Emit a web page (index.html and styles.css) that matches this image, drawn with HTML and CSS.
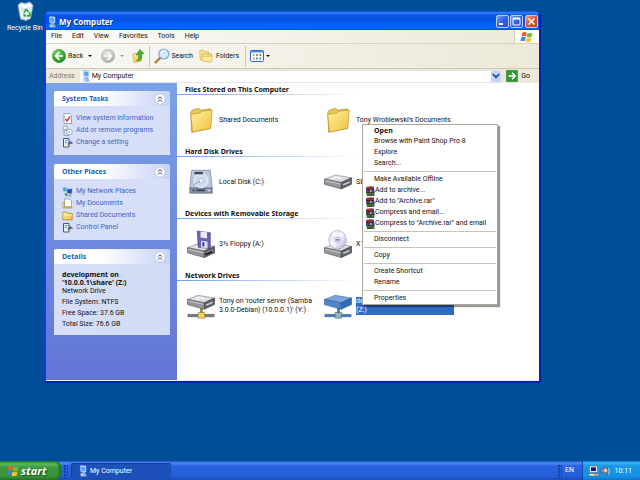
FILE: index.html
```html
<!DOCTYPE html>
<html lang="en">
<head>
    <meta charset="UTF-8">
    <meta name="viewport" content="width=device-width, initial-scale=1.0">
    <title>My Computer</title>
    <link rel="stylesheet" href="styles.css">
</head>
<body>

<!-- Icons -->
<svg class="sprite" aria-hidden="true">
  <defs>
    <linearGradient id="gFolder" x1="0" y1="0" x2="1" y2="1">
      <stop offset="0" stop-color="#fff3a0"/><stop offset="1" stop-color="#f0bf3c"/>
    </linearGradient>
    <radialGradient id="gGreen" cx="0.4" cy="0.3" r="0.8">
      <stop offset="0" stop-color="#7fdc6c"/><stop offset="0.6" stop-color="#35a52c"/><stop offset="1" stop-color="#1c7a1a"/>
    </radialGradient>
    <radialGradient id="gGrey" cx="0.4" cy="0.3" r="0.8">
      <stop offset="0" stop-color="#e6e6e2"/><stop offset="1" stop-color="#a9a9a4"/>
    </radialGradient>
    <linearGradient id="gDisc" x1="0" y1="0" x2="1" y2="1">
      <stop offset="0" stop-color="#d9d4f4"/><stop offset="0.5" stop-color="#f6f6ff"/><stop offset="1" stop-color="#a9a6dc"/>
    </linearGradient>
  </defs>
  <symbol id="computer" viewBox="0 0 12 12">
    <path d="M3.500 .5l5.500 .5v6l-5.500-.5z" fill="#dfe9f6" stroke="#8fb0d8" stroke-width="0.500"/>
    <path d="M4.200 1.500l4 .4v4.200l-4-.4z" fill="#4fa4f6"/>
    <path d="M5 7h2.800l.5 1.500H4.500z" fill="#8fb4dc"/>
    <path d="M3.500 8.500h5l.8 2.800H4z" fill="#cfe2f5" stroke="#6f93c0" stroke-width="0.500"/>
    <path d="M6 9.500h2.500v1H6z" fill="#3c8ee0"/>
  </symbol>
  <symbol id="winflag" viewBox="0 0 14 12">
    <path d="M2.500 1.500Q4.500.3 6.800 1.500L5.900 5.500Q3.600 4.400 1.500 5.500z" fill="#e8602c"/>
    <path d="M7.600 1.800Q10 2.900 12.500 1.700L11.600 5.700Q9 7 6.700 5.800z" fill="#7ab93b"/>
    <path d="M1.300 6.300Q3.500 5.200 5.700 6.300L4.800 10.300Q2.500 9.300.4 10.300z" fill="#3e83dd"/>
    <path d="M6.500 6.700Q8.900 7.800 11.400 6.500L10.500 10.500Q8 11.700 5.600 10.600z" fill="#f7c42c"/>
  </symbol>
  <symbol id="back" viewBox="0 0 14 14">
    <circle cx="7" cy="7" r="6.700" fill="url(#gGreen)" stroke="#3d9a38" stroke-width="0.500"/>
    <path d="M7.400 3.200L3.600 7l3.800 3.800M4 7h7" fill="none" stroke="#fff" stroke-width="1.700"/>
  </symbol>
  <symbol id="forward" viewBox="0 0 14 14">
    <circle cx="7" cy="7" r="6.700" fill="url(#gGrey)" stroke="#a8a8a2" stroke-width="0.500"/>
    <path d="M6.600 3.200L10.400 7l-3.800 3.800M10 7H3" fill="none" stroke="#fff" stroke-width="1.700"/>
  </symbol>
  <symbol id="up" viewBox="0 0 14 14">
    <path d="M2 5l3.500-1 1 1 4-.5v7.500L3 13.500z" fill="url(#gFolder)" stroke="#b58b1e" stroke-width="0.500"/>
    <path d="M5.500 12Q8.500 10 7.500 5.500L5 6l4-5.500L13 4.500l-2.500.5Q12 11 5.500 12z" fill="#44b32f" stroke="#247c18" stroke-width="0.500"/>
  </symbol>
  <symbol id="search" viewBox="0 0 16 16">
    <path d="M6.500 9.500L1.500 14.500" stroke="#b8793e" stroke-width="2.400" stroke-linecap="round"/>
    <circle cx="9.800" cy="6" r="5" fill="#cfeafc" stroke="#86a9cf" stroke-width="1.200"/>
    <path d="M7 5.500Q8 3 10.500 3" fill="none" stroke="#fff" stroke-width="1.200"/>
  </symbol>
  <symbol id="folders" viewBox="0 0 14 14">
    <path d="M.5 2l4-1 1 1.500h4v7L1.500 11z" fill="#f8e38a" stroke="#c6a13a" stroke-width="0.500"/>
    <path d="M3.500 5l3-1 1 1.200 5-.4L12 13 4 12z" fill="url(#gFolder)" stroke="#b58b1e" stroke-width="0.500"/>
    <path d="M3 7.500h8l2.500-.5-1.500 6-8-1z" fill="#ffef9e" stroke="#c9a23c" stroke-width="0.400"/>
  </symbol>
  <symbol id="views" viewBox="0 0 14 12">
    <rect x="0.500" y="0.500" width="13" height="11" rx="1" fill="#fff" stroke="#2a66c8"/>
    <path d="M1 1h12v1.500H1z" fill="#4b8df0"/>
    <path d="M3 4h1.500v2H3z" fill="#7a9fd8"/><path d="M6.200 4h1.500v2H6.200z" fill="#d2453a"/><path d="M9.500 4H11v2H9.500z" fill="#35964a"/>
    <path d="M3 7.500h1.500v2H3z" fill="#c88b3c"/><path d="M6.200 7.500h1.500v2H6.200z" fill="#3569c4"/><path d="M9.500 7.500H11v2H9.500z" fill="#4a6a9c"/>
  </symbol>
  <symbol id="go" viewBox="0 0 12 12">
    <rect x="0.300" y="0.300" width="11.400" height="11.400" rx="1" fill="#35953a" stroke="#2f7d30" stroke-width="0.500"/>
    <path d="M6 2.800L9.200 6 6 9.200M9 6H2.500" fill="none" stroke="#fff" stroke-width="1.400"/>
  </symbol>
  <symbol id="chevrons" viewBox="0 0 12 12">
    <circle cx="6" cy="6" r="5.200" fill="#fff" stroke="#b3bfe0" stroke-width="0.700"/>
    <path d="M4 5.700l2-2 2 2M4 8.600l2-2 2 2" fill="none" stroke="#223a86" stroke-width="1"/>
  </symbol>
  <symbol id="sysinfo" viewBox="0 0 11 11">
    <path d="M2 .5h5.500L9.500 2.500v8H2z" fill="#fff" stroke="#76829e" stroke-width="0.700"/>
    <path d="M3.500 6l1.500 2L8 3.500" fill="none" stroke="#d43424" stroke-width="1.400"/>
  </symbol>
  <symbol id="programs" viewBox="0 0 11 11">
    <path d="M1 1h4v4H1z" fill="#e8f1e4" stroke="#6c9a76" stroke-width="0.600"/>
    <path d="M2 5h5v5.500H2z" fill="#cfdcf5" stroke="#6b7fae" stroke-width="0.600"/>
    <circle cx="7.500" cy="7" r="2.800" fill="#f4f6fd" stroke="#8190b4" stroke-width="0.600"/>
    <circle cx="7.500" cy="7" r="0.700" fill="#6a7aa8"/>
  </symbol>
  <symbol id="panel" viewBox="0 0 11 11">
    <path d="M1.500 1.500h5.500v8.500H1.500z" fill="#e6f0fb" stroke="#3f5a80" stroke-width="1"/>
    <path d="M3 3.500h2.500M3 5.500h2" stroke="#3a88d8" stroke-width="0.800"/>
    <path d="M6 7.500l3-3M7.500 6h3" stroke="#4d5c70" stroke-width="1.500"/>
    <path d="M6 8.500h2.500" stroke="#d8962e" stroke-width="1"/>
  </symbol>
  <symbol id="network" viewBox="0 0 11 11">
    <path d="M.5 1l5 .5v4.500L1 5.500z" fill="#36a8d8" stroke="#d5e4f4" stroke-width="0.600"/>
    <path d="M4.500 3l6-.5-.5 5.500-5-.5z" fill="#2350b8" stroke="#dbe6f8" stroke-width="0.600"/>
    <path d="M2.500 6.500l3 1.500 .5 2.500-3-1z" fill="#47a65a"/><path d="M6.500 8.500h3.500L9 10.500H7z" fill="#8ba0c4"/>
  </symbol>
  <symbol id="mydocs" viewBox="0 0 11 11">
    <path d="M2.500 1h5l2 2v6h-7z" fill="#fff" stroke="#6782a8" stroke-width="0.600"/>
    <path d="M.8 4.500L2.500 4v5l7-.2.700 1.200H1z" fill="url(#gFolder)" stroke="#a8811c" stroke-width="0.600"/>
  </symbol>
  <symbol id="smallfolder" viewBox="0 0 11 11">
    <path d="M.8 2h3.400l1 1.300h5v6.500H.8z" fill="url(#gFolder)" stroke="#a8811c" stroke-width="0.700"/>
    <path d="M1.500 5h8.300" stroke="#fff5bd" stroke-width="0.900"/>
  </symbol>
  <symbol id="folder" viewBox="0 0 30 30">
    <path d="M4 7l1.500-2.500 7-2L15 4.500 25 3l1 1.500-1 19.500L5 28z" fill="#edc750" stroke="#ab842a" stroke-width="0.700"/>
    <path d="M4 9l10-1.500 2-2L27 4.500 25.500 24 6 28z" fill="url(#gFolder)" stroke="#b8912f" stroke-width="0.700"/>
  </symbol>
  <symbol id="hdd" viewBox="0 0 30 30">
    <path d="M5 2.500h20l2 19H3z" fill="#bcc9dc" stroke="#6d7b92" stroke-width="0.700"/>
    <path d="M3 21.500h24v5.500H3z" fill="#8994a8" stroke="#4e5a70" stroke-width="0.700"/>
    <circle cx="15" cy="13.500" r="7.500" fill="#d3dcea" stroke="#eef3fa"/>
    <circle cx="15" cy="13.500" r="2.500" fill="#f0f4fa" stroke="#93a1b8" stroke-width="0.600"/>
    <path d="M8 4.200h9v2.500H8z" fill="#3d4658"/><path d="M7 18l7-4" stroke="#8997ae"/>
    <path d="M6 24h2M10 24h9" stroke="#333d4f" stroke-width="1.800"/><path d="M22 24h3" stroke="#d8e2ee" stroke-width="1.500"/>
  </symbol>
  <symbol id="box" viewBox="0 0 30 16">
    <path d="M.5 5L12 .5l17.500 3L18.500 8.500z" fill="#dedfe1" stroke="#77797d" stroke-width="0.600"/>
    <path d="M.5 5l18 3.500v7L.5 10.500z" fill="#94969b" stroke="#4a4c51" stroke-width="0.600"/>
    <path d="M29.500 3.500v7l-11 5v-7z" fill="#5f6167" stroke="#333539" stroke-width="0.600"/>
    <path d="M1.500 6.700l16.500 3.600" stroke="#c9cbce" stroke-width="1"/>
    <path d="M9 4.500l4-1.500 6 1" fill="none" stroke="#fff"/>
    <path d="M20.500 11l7-3" stroke="#d0d2d5" stroke-width="1.500"/>
  </symbol>
  <symbol id="drive" viewBox="0 0 30 30">
    <use href="#box" x="0" y="7" width="30" height="16"/>
  </symbol>
  <symbol id="floppy" viewBox="0 0 30 30">
    <use href="#box" x="0" y="14" width="30" height="16"/>
    <path d="M11 1l14 2v17l-13-1.500z" fill="#6462b4" stroke="#3c3a86" stroke-width="0.600"/>
    <path d="M14.500 1.500l7 1v6.500l-7-1z" fill="#eceaf8"/><path d="M15 11.500l7 .8V19.600l-7-.8z" fill="#d9dcf0"/>
    <path d="M16.500 13l2 .2v4.500l-2-.2z" fill="#3c3a86"/>
    <path d="M20 26l7-3" stroke="#111" stroke-width="1.800"/>
  </symbol>
  <symbol id="cdrom" viewBox="0 0 30 30">
    <use href="#box" x="0" y="14" width="30" height="16"/>
    <ellipse cx="14.500" cy="10.500" rx="9.300" ry="10" fill="url(#gDisc)" stroke="#8c8ab4" stroke-width="0.600"/>
    <path d="M14.500 10.500L8 4q3-3.500 7-3z" fill="#fff" opacity="0.700"/>
    <circle cx="14.500" cy="10.500" r="3" fill="#e4e4ee" stroke="#8a8aa6" stroke-width="0.600"/>
    <circle cx="14.500" cy="10.500" r="1.200" fill="#55577a"/>
  </symbol>
  <symbol id="netdrive" viewBox="0 0 30 30">
    <path d="M14 17h3v7h-3z" fill="#8f9136"/>
    <use href="#box" x="0" y="3" width="30" height="16"/>
    <path d="M1 24h28v2.500H1z" fill="#7c7f84" stroke="#3f4246" stroke-width="0.600"/>
    <path d="M12 22h7v6h-7z" fill="#f5d66a" stroke="#94792a" stroke-width="0.700"/>
  </symbol>
  <symbol id="netselected" viewBox="0 0 30 30">
    <path d="M14 17h3v7h-3z" fill="#4c7a8e"/>
    <path d="M.5 8L12 3.500l17.500 3L18.500 11.500z" fill="#7aa6dc" stroke="#39659f" stroke-width="0.600"/>
    <path d="M.5 8l18 3.500v7L.5 13.500z" fill="#5286c6" stroke="#2b5796" stroke-width="0.600"/>
    <path d="M29.500 6.500v7l-11 5v-7z" fill="#346bb0" stroke="#23508c" stroke-width="0.600"/>
    <path d="M1 24h28v2.500H1z" fill="#4379b8" stroke="#24538f" stroke-width="0.600"/>
    <path d="M12 22h7v6h-7z" fill="#93b5bf" stroke="#426d8c" stroke-width="0.700"/>
  </symbol>
  <symbol id="rar" viewBox="0 0 10 10">
    <path d="M1 1.500L2.500.5H9V3L9.500 4H1z" fill="#9c2b4c"/>
    <path d="M1 4h8.500v2.500H1z" fill="#2f4fb0"/><path d="M1 6.800h8.500V9.500H2z" fill="#2d8a3e"/>
    <path d="M1.500 3.600h7M1.500 6.500h8M2 9.300h7" stroke="#151515" stroke-width="0.800"/>
    <path d="M5 .5h1.700v9H5z" fill="#7a3a24"/><path d="M5.200 4h1.300v2H5.200z" fill="#e2c04a"/>
  </symbol>
  <symbol id="bin" viewBox="0 0 20 20">
    <path d="M3 4l3-2.500 4 1 5-1.500 3 3.500-2.500 13L11 19.500 5.500 18z" fill="#dcebf2" stroke="#94b8cc" stroke-width="0.700"/>
    <path d="M4 4.500L7 3l3 1.500L14.500 3 17 5l-6 2z" fill="#fff"/>
    <path d="M5 6l2 11M11 7.500v11" stroke="#fff" stroke-width="1"/>
    <path d="M9 11.500l2-3 2.500 2M14.500 11l.5 3.500-3 .7M11 15.500l-2.500-2.200" fill="none" stroke="#37ad3b" stroke-width="1.800"/>
  </symbol>
  <symbol id="traynet" viewBox="0 0 12 12">
    <path d="M1.500 1h8v6.500h-8z" fill="#f4f1e4" stroke="#555" stroke-width="0.500"/>
    <path d="M3 2.300h5v3.800H3z" fill="#14148e"/>
    <path d="M1 8.500h9.500V11H1z" fill="#ece8d8" stroke="#555" stroke-width="0.500"/>
    <path d="M6.500 9.800h3" stroke="#333" stroke-width="0.700"/>
  </symbol>
  <symbol id="speaker" viewBox="0 0 10 10">
    <path d="M.5 3.500l2-.5 3.500-2.500L8 4 7 8.500 3.500 7 1 6.500z" fill="#8e9296" stroke="#4c5054" stroke-width="0.600"/>
    <circle cx="5.500" cy="4.500" r="2" fill="#dadcde" stroke="#55585c" stroke-width="0.500"/>
    <path d="M8.500 2q1.500 3 0 6.500" fill="none" stroke="#d2dce8" stroke-width="0.900"/>
  </symbol>
</svg>

<main class="desktop">
  <button class="shortcut" type="button">
    <svg class="icon-20"><use href="#bin"/></svg>
    <span>Recycle Bin</span>
  </button>

  <!-- Explorer window -->
  <section class="window">
    <header class="titlebar">
      <svg class="icon-12"><use href="#computer"/></svg>
      <h1>My Computer</h1>
      <div class="window-buttons">
        <button class="win-btn" type="button" aria-label="Minimize"><svg viewBox="0 0 11 11"><path d="M2 8h4" stroke="#fff" stroke-width="2"/></svg></button>
        <button class="win-btn" type="button" aria-label="Maximize"><svg viewBox="0 0 11 11"><path d="M2 2.500h7v6.500H2z" fill="none" stroke="#fff"/><path d="M2 2.500h7" stroke="#fff" stroke-width="2"/></svg></button>
        <button class="win-btn close" type="button" aria-label="Close"><svg viewBox="0 0 11 11"><path d="M2.500 2.500l6 6M8.500 2.500l-6 6" stroke="#fff" stroke-width="1.600"/></svg></button>
      </div>
    </header>

    <nav class="menubar">
      <button type="button">File</button>
      <button type="button">Edit</button>
      <button type="button">View</button>
      <button type="button">Favorites</button>
      <button type="button">Tools</button>
      <button type="button">Help</button>
      <span class="brand"><svg class="icon-14"><use href="#winflag"/></svg></span>
    </nav>

    <div class="toolbar">
      <button class="tool tool-back" type="button"><svg class="icon-14"><use href="#back"/></svg>Back<i class="caret"></i></button>
      <button class="tool tool-forward" type="button" aria-label="Forward" disabled><svg class="icon-14"><use href="#forward"/></svg><i class="caret"></i></button>
      <button class="tool" type="button" aria-label="Up"><svg class="icon-14"><use href="#up"/></svg></button>
      <span class="divider"></span>
      <button class="tool tool-search" type="button"><svg class="icon-16"><use href="#search"/></svg>Search</button>
      <button class="tool tool-folders" type="button"><svg class="icon-14"><use href="#folders"/></svg>Folders</button>
      <span class="divider"></span>
      <button class="tool" type="button" aria-label="Views"><svg class="icon-14"><use href="#views"/></svg><i class="caret"></i></button>
    </div>

    <form class="address">
      <label for="address">Address</label>
      <div class="address-box">
        <svg class="icon-12"><use href="#computer"/></svg>
        <input id="address" type="text" value="My Computer">
        <button class="drop" type="button" aria-label="Show list"><svg viewBox="0 0 8 8"><path d="M1.500 2.500L4 5l2.500-2.500" fill="none" stroke="#3b5795" stroke-width="1.600"/></svg></button>
      </div>
      <button class="go" type="button"><svg class="icon-12"><use href="#go"/></svg>Go</button>
    </form>

    <div class="content">
      <aside class="sidebar">
        <section class="panel">
          <h2>System Tasks <svg class="icon-12"><use href="#chevrons"/></svg></h2>
          <ul class="links">
            <li><a href="#"><svg class="icon-11"><use href="#sysinfo"/></svg>View system information</a></li>
            <li><a href="#"><svg class="icon-11"><use href="#programs"/></svg>Add or remove programs</a></li>
            <li><a href="#"><svg class="icon-11"><use href="#panel"/></svg>Change a setting</a></li>
          </ul>
        </section>
        <section class="panel">
          <h2>Other Places <svg class="icon-12"><use href="#chevrons"/></svg></h2>
          <ul class="links">
            <li><a href="#"><svg class="icon-11"><use href="#network"/></svg>My Network Places</a></li>
            <li><a href="#"><svg class="icon-11"><use href="#mydocs"/></svg>My Documents</a></li>
            <li><a href="#"><svg class="icon-11"><use href="#smallfolder"/></svg>Shared Documents</a></li>
            <li><a href="#"><svg class="icon-11"><use href="#panel"/></svg>Control Panel</a></li>
          </ul>
        </section>
        <section class="panel">
          <h2>Details <svg class="icon-12"><use href="#chevrons"/></svg></h2>
          <div class="details">
            <strong>development on<br>'10.0.0.1\share' (Z:)</strong>
            <span>Network Drive</span>
            <p>File System: NTFS</p>
            <p>Free Space: 37.6 GB</p>
            <p>Total Size: 76.6 GB</p>
          </div>
        </section>
      </aside>

      <div class="files">
        <section class="group">
          <h2>Files Stored on This Computer</h2>
          <div class="items">
            <div class="item"><svg class="icon-28"><use href="#folder"/></svg><span>Shared Documents</span></div>
            <div class="item"><svg class="icon-28"><use href="#folder"/></svg><span>Tony Wroblewski's Documents</span></div>
          </div>
        </section>
        <section class="group">
          <h2>Hard Disk Drives</h2>
          <div class="items">
            <div class="item"><svg class="icon-28"><use href="#hdd"/></svg><span>Local Disk (C:)</span></div>
            <div class="item"><svg class="icon-28"><use href="#drive"/></svg><span>SE</span></div>
          </div>
        </section>
        <section class="group">
          <h2>Devices with Removable Storage</h2>
          <div class="items">
            <div class="item"><svg class="icon-28"><use href="#floppy"/></svg><span>3½ Floppy (A:)</span></div>
            <div class="item"><svg class="icon-28"><use href="#cdrom"/></svg><span>X1</span></div>
          </div>
        </section>
        <section class="group">
          <h2>Network Drives</h2>
          <div class="items">
            <div class="item"><svg class="icon-28"><use href="#netdrive"/></svg><span>Tony on 'router server (Samba<br>3.0.0-Debian) (10.0.0.1)' (Y:)</span></div>
            <div class="item selected"><svg class="icon-28"><use href="#netselected"/></svg><span>de<br>(Z:)</span></div>
          </div>
        </section>
      </div>
    </div>
  </section>

  <!-- Right click menu -->
  <div class="context-menu" role="menu">
    <button type="button" role="menuitem" class="default">Open</button>
    <button type="button" role="menuitem">Browse with Paint Shop Pro 8</button>
    <button type="button" role="menuitem">Explore</button>
    <button type="button" role="menuitem">Search...</button>
    <hr>
    <button type="button" role="menuitem">Make Available Offline</button>
    <button type="button" role="menuitem" class="with-icon"><svg class="icon-10"><use href="#rar"/></svg>Add to archive...</button>
    <button type="button" role="menuitem" class="with-icon"><svg class="icon-10"><use href="#rar"/></svg>Add to "Archive.rar"</button>
    <button type="button" role="menuitem" class="with-icon"><svg class="icon-10"><use href="#rar"/></svg>Compress and email...</button>
    <button type="button" role="menuitem" class="with-icon"><svg class="icon-10"><use href="#rar"/></svg>Compress to "Archive.rar" and email</button>
    <hr>
    <button type="button" role="menuitem">Disconnect</button>
    <hr>
    <button type="button" role="menuitem">Copy</button>
    <hr>
    <button type="button" role="menuitem">Create Shortcut</button>
    <button type="button" role="menuitem">Rename</button>
    <hr>
    <button type="button" role="menuitem">Properties</button>
  </div>
</main>

<footer class="taskbar">
  <button class="start" type="button"><svg class="icon-14"><use href="#winflag"/></svg>start</button>
  <span class="grip"></span>
  <button class="task" type="button"><svg class="icon-12"><use href="#computer"/></svg>My Computer</button>
  <span class="grip grip-right"></span>
  <span class="lang">EN</span>
  <div class="tray">
    <svg class="icon-12"><use href="#traynet"/></svg>
    <svg class="icon-10"><use href="#speaker"/></svg>
    <time>10:11</time>
  </div>
</footer>

</body>
</html>
```
FILE: styles.css
```css
* {
    box-sizing: border-box;
}
body {
    margin: 0;
    height: 100vh;
    display: flex;
    flex-direction: column;
    overflow: hidden;
    background: #004e98;
    font-family: Tahoma, Roboto, sans-serif;
    font-size: 7px;
    line-height: 9px;
    color: #111;
}
button, input {
    font: inherit;
    color: inherit;
    padding: 0;
    border: none;
    background: none;
    white-space: nowrap;
}
h1, h2, p, ul {
    margin: 0;
    padding: 0;
}
h2, strong, .default {
    font-family: Tahoma, 'Noto Sans', sans-serif;
}
ul {
    list-style: none;
}
svg {
    display: block;
    flex: none;
}
.sprite {
    position: absolute;
    width: 0;
    height: 0;
}
.icon-10 { width: 10px; height: 10px; }
.icon-11 { width: 11px; height: 11px; }
.icon-12 { width: 12px; height: 12px; }
.icon-14 { width: 14px; height: 14px; }
.icon-16 { width: 16px; height: 16px; }
.icon-20 { width: 20px; height: 20px; }
.icon-28 { width: 28px; height: 28px; }

/* Desktop */
.desktop {
    flex: 1;
    position: relative;
}
.shortcut {
    position: absolute;
    left: 7px;
    top: 1px;
    display: flex;
    flex-direction: column;
    align-items: center;
    gap: 3px;
    color: #fff;
}

/* Window */
.window {
    position: absolute;
    inset: 11px 99px 78px 44px;
    display: flex;
    flex-direction: column;
    border: 2px solid #0c3fdc;
    border-top: none;
    border-right-color: #0526ac;
    border-bottom-color: #0526ac;
    border-radius: 5px 5px 0 0;
    background: #0c3fdc;
}
.titlebar {
    height: 19px;
    display: flex;
    align-items: center;
    gap: 1px;
    padding: 2px 1px 0 0;
    background: linear-gradient(#0a4ad8, #2f86ff 2px, #0a55e4 4px, #0351e2 9px, #0566fd 15px, #0464f8 18px, #0340c0);
    border-radius: 4px 4px 0 0;
    color: #fff;
}
.titlebar h1 {
    font-family: 'Trebuchet MS', 'Open Sans', sans-serif;
    font-size: 8px;
    font-weight: bold;
    text-shadow: 1px 1px #0a2e8c;
}
.window-buttons {
    display: flex;
    gap: 1px;
    margin-left: auto;
}
.win-btn {
    width: 13px;
    height: 13px;
    border: 1px solid #b9cdf8;
    border-radius: 2px;
    background: linear-gradient(135deg, #7ba0f4, #2a62e4 50%, #2458d8);
}
.win-btn.close {
    margin-left: 1px;
    background: linear-gradient(135deg, #f0a28c, #df5532 50%, #c8401c);
}

/* Bars */
.menubar {
    height: 14px;
    display: flex;
    align-items: center;
    gap: 10px;
    padding-left: 5px;
    background: linear-gradient(90deg, #fbfbf8, #ece9d8);
    border-bottom: 1px solid #d8d2bd;
}
.brand {
    align-self: stretch;
    width: 25px;
    margin-left: auto;
    display: flex;
    align-items: center;
    justify-content: center;
    background: #fff;
    border-left: 1px solid #d8d2bd;
}
.toolbar {
    height: 25px;
    display: flex;
    align-items: center;
    gap: 4px;
    padding-left: 6px;
    background: linear-gradient(90deg, #f8f8f4, #ece9d8);
    border-bottom: 1px solid #cdc8b4;
}
.tool {
    display: flex;
    align-items: center;
    gap: 2px;
}
.tool-back {
    margin-right: 5px;
}
.tool-back .caret {
    margin-left: 3px;
}
.tool-forward {
    gap: 5px;
    margin-right: 3px;
}
.tool-forward .caret {
    opacity: 0.4;
}
.tool-search {
    gap: 1px;
    margin-right: 2px;
}
.tool-folders {
    gap: 3px;
    margin-right: 2px;
}
.caret {
    border: 2px solid transparent;
    border-top-color: #111;
    border-bottom: none;
}
.divider {
    width: 1px;
    height: 21px;
    background: #cbc7b5;
}
.address {
    height: 14px;
    display: flex;
    align-items: center;
    gap: 4px;
    padding: 0 9px 0 3px;
    background: #ece9d8;
}
.address label {
    color: #7f7c73;
}
.address-box {
    flex: 1;
    height: 13px;
    display: flex;
    align-items: center;
    background: #fff;
    border: 1px solid #e4e6ea;
}
.address-box input {
    flex: 1;
    min-width: 0;
}
.drop {
    width: 10px;
    height: 11px;
    border-radius: 1px;
    background: #c3d3fb;
}
.go {
    display: flex;
    align-items: center;
    gap: 3px;
}

/* Sidebar */
.content {
    flex: 1;
    display: flex;
    background: #fff;
    border-bottom: 1px solid #e8eefc;
}
.sidebar {
    width: 131px;
    display: flex;
    flex-direction: column;
    gap: 9px;
    padding: 8px 7px 8px 8px;
    background: linear-gradient(#7ba2e7, #6375d6);
}
.panel h2 {
    height: 15px;
    display: flex;
    align-items: center;
    justify-content: space-between;
    padding: 0 4px 0 8px;
    border-radius: 2px 2px 0 0;
    background: linear-gradient(90deg, #fff 40%, #c6d3f7);
    color: #215dc6;
    font-size: 7px;
}
.links {
    padding: 6px 8px 7px;
    background: #d6dff7;
}
.links a {
    height: 12px;
    display: flex;
    align-items: center;
    gap: 3px;
    color: #3a66c8;
    text-decoration: none;
    white-space: nowrap;
}
.details {
    padding: 7px 8px;
    background: linear-gradient(90deg, #d6dff7, #d0dcf6);
    line-height: 8px;
}
.details strong, .details span {
    display: block;
}
.details p {
    margin-top: 3px;
}

/* Files */
.files {
    flex: 1;
    min-width: 0;
}
.group h2 {
    height: 12px;
    padding: 2px 0 0 8px;
    font-size: 7px;
    border-bottom: 1px solid;
    border-image: linear-gradient(90deg, #6f9fee, #fff 50%) 1;
}
.items {
    height: 50px;
    display: grid;
    grid-template-columns: 137px 137px;
    align-items: center;
    padding-left: 10px;
}
.item {
    display: flex;
    align-items: center;
    gap: 4px;
    white-space: nowrap;
}
.selected span {
    width: 98px;
    background: #316ac5;
    color: #fff;
}

/* Context menu */
.context-menu {
    position: absolute;
    left: 362px;
    top: 124px;
    width: 136px;
    display: flex;
    flex-direction: column;
    background: #fff;
    border: 1px solid #aca899;
    box-shadow: 2px 2px 1px rgba(0, 0, 0, 0.4);
}
.context-menu button {
    height: 11px;
    display: flex;
    align-items: center;
    padding-left: 11px;
}
.context-menu .with-icon {
    padding-left: 2px;
}
.context-menu .default {
    font-weight: bold;
}
.context-menu hr {
    width: 132px;
    height: 1px;
    margin: 2px auto;
    border: none;
    background: #c6c3b8;
}

/* Taskbar */
.taskbar {
    height: 19px;
    display: flex;
    align-items: stretch;
    background: linear-gradient(#1f4fc4, #4a8cf4 2px, #2a62de 5px, #245edb 15px, #1c48b4);
    color: #fff;
}
.start {
    width: 61px;
    display: flex;
    align-items: center;
    gap: 1px;
    padding-left: 6px;
    border-radius: 0 6px 6px 0;
    background: linear-gradient(#2b7a2b, #5cb85a 3px, #3c963c 7px, #37963a 15px, #2a742b);
    box-shadow: inset -2px 0 2px #236b24;
    font-family: 'Trebuchet MS', 'Open Sans', sans-serif;
    font-size: 11px;
    font-weight: bold;
    font-style: italic;
    text-shadow: 1px 1px 1px #1c4a1c;
}
.grip {
    width: 4px;
    margin: 4px 3px 2px;
    background: radial-gradient(circle at 1px 1px, #173e9e 1px, transparent 1px) 0 0 / 3px 3px;
}
.grip-right {
    margin-left: auto;
}
.task {
    width: 100px;
    margin: 2px 0 1px;
    display: flex;
    align-items: center;
    gap: 1px;
    padding-left: 6px;
    border-radius: 2px;
    background: #1d50b8;
    box-shadow: inset 1px 1px 1px #143c94;
}
.lang {
    align-self: center;
    margin-right: 8px;
}
.tray {
    width: 58px;
    display: flex;
    align-items: center;
    padding: 1px 8px 0 5px;
    border-left: 1px solid #14489c;
    background: linear-gradient(#1470d0, #3cb4f8 2px, #1a96ec 5px, #1592e8 15px, #1074c4);
}
.tray time {
    margin-left: auto;
}
```
